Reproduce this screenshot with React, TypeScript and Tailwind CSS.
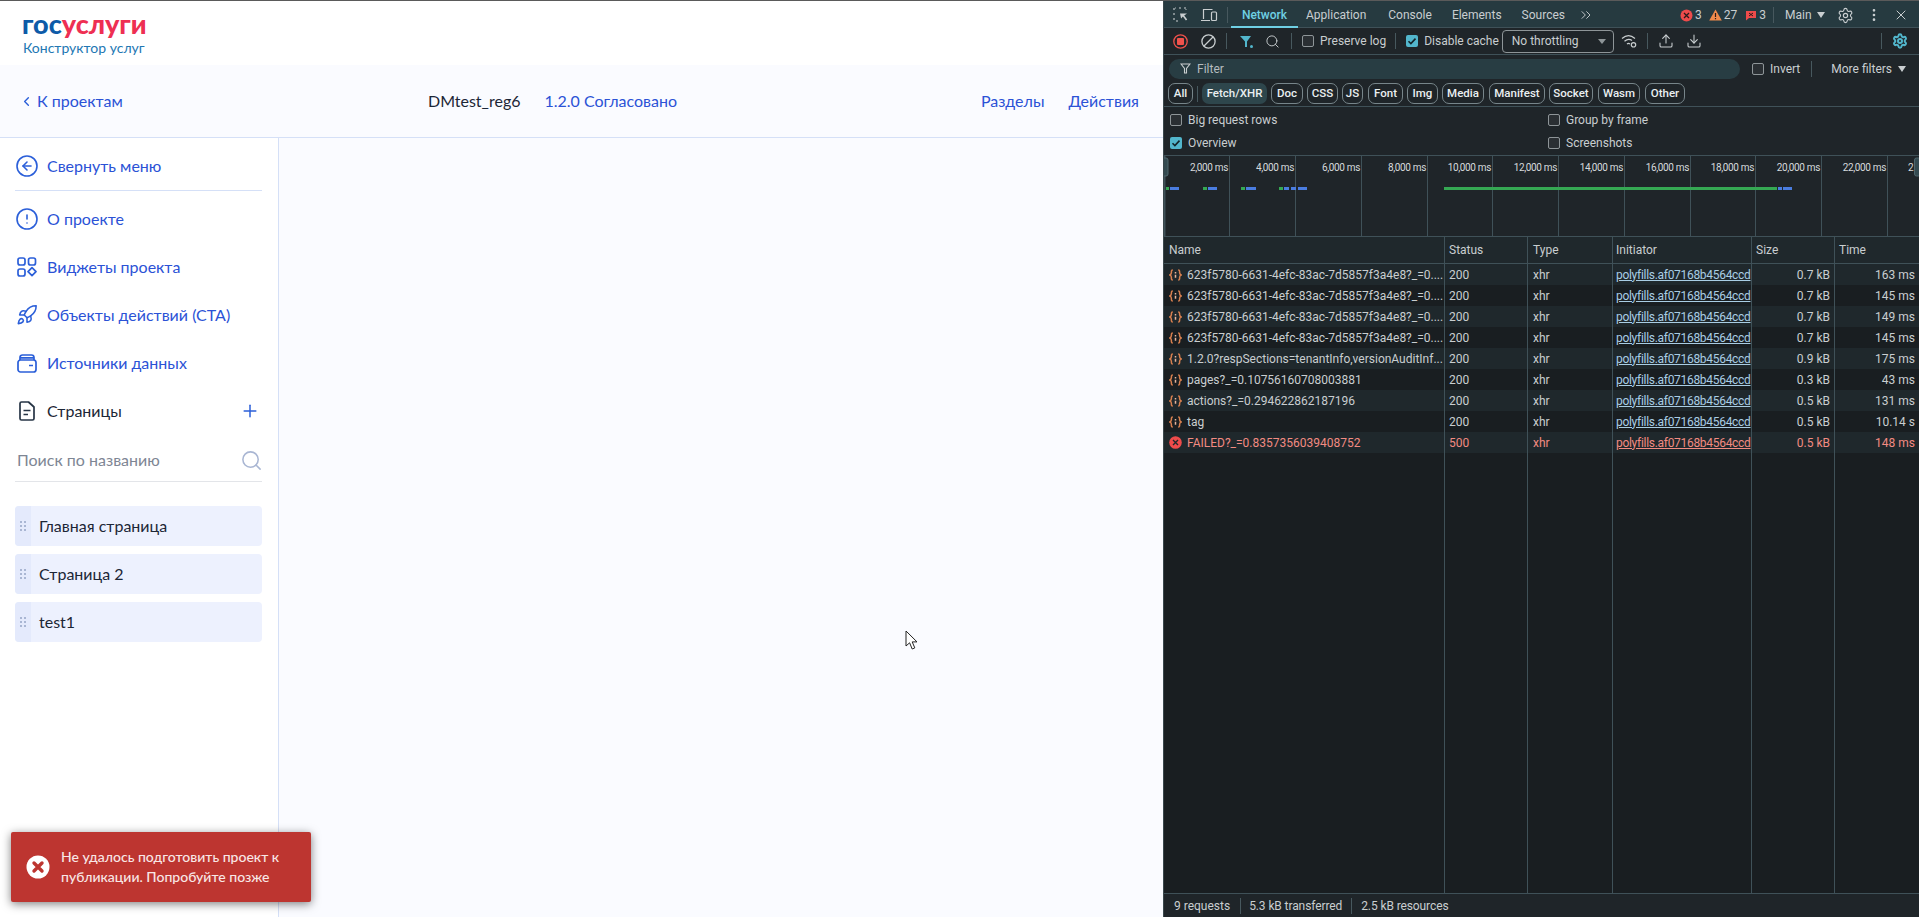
import React from "react";
import { CircleArrowLeft, CircleAlert, Rocket, Plus, Search, ChevronLeft, Settings, MoreVertical, X, Upload, Download, ChevronsRight } from "lucide-react";

const blue = "text-[#2b52d6]";

function Widgets() {
  return (
    <svg width="20" height="20" viewBox="0 0 20 20" fill="none" stroke="#2b5fd9" strokeWidth="1.7" className="shrink-0">
      <rect x="1" y="1" width="7" height="7" rx="2" />
      <rect x="11.5" y="1" width="7" height="7" rx="2" />
      <rect x="1" y="12" width="7" height="7" rx="2" />
      <path d="M15 10.6l4 4-4 4-4-4z" strokeLinejoin="round" />
    </svg>
  );
}
function Wallet() {
  return (
    <svg width="20" height="19" viewBox="0 0 20 19" fill="none" stroke="#2b5fd9" strokeWidth="1.7" className="shrink-0">
      <rect x="1" y="6" width="18" height="12" rx="2.5" />
      <path d="M3 6V3.5C3 2 4 1 5.5 1h9C16 1 17 2 17 3.5V6M3 3.8h14M12 11.5h4" />
    </svg>
  );
}
function Doc() {
  return (
    <svg width="16" height="20" viewBox="0 0 16 20" fill="none" stroke="#263445" strokeWidth="1.7" className="shrink-0">
      <path d="M2.5 1h7l5.5 5v11.5a1.5 1.5 0 0 1-1.5 1.5h-11A1.5 1.5 0 0 1 1 17.5v-15A1.5 1.5 0 0 1 2.5 1z" strokeLinejoin="round" />
      <path d="M4.5 9.5h7M4.5 13.5h4.5" />
    </svg>
  );
}

function NavRow({ icon, label, h = "h-12", dark = false, right }: { icon: React.ReactNode; label: string; h?: string; dark?: boolean; right?: React.ReactNode }) {
  return (
    <div className={`flex items-center ${h}`}>
      <div className="w-[24px] mr-[8px] flex justify-center shrink-0">{icon}</div>
      <span className={`text-[16px] ${dark ? "text-[#1c2636]" : blue}`}>{label}</span>
      {right}
    </div>
  );
}

function PageItem({ label }: { label: string }) {
  return (
    <div className="h-[40px] rounded-[4px] bg-[#edf1fe] flex overflow-hidden mb-[8px] items-center">
      <div className="w-[16px] h-full bg-[#e4eafc] flex items-center justify-center shrink-0">
        <svg width="6" height="10" viewBox="0 0 6 10" fill="#a9b6d3">
          <rect x="0" y="0" width="2" height="2" /><rect x="4" y="0" width="2" height="2" />
          <rect x="0" y="4" width="2" height="2" /><rect x="4" y="4" width="2" height="2" />
          <rect x="0" y="8" width="2" height="2" /><rect x="4" y="8" width="2" height="2" />
        </svg>
      </div>
      <span className="ml-[8px] text-[16px] text-[#1c2636]">{label}</span>
    </div>
  );
}

function LeftApp() {
  return (
    <div className="w-[1163px] h-full flex flex-col relative bg-[#fafbff] font-['Lato',sans-serif]">
      <header className="h-[64px] bg-white pl-[22px] pt-[9px] shrink-0">
        <div className="text-[27px] leading-[28px] font-black font-['Lato',sans-serif]">
          <span className="text-[#0d5ba8]">гос</span><span className="text-[#ee2f53]">услуги</span>
        </div>
        <div className="text-[14px] leading-[18px] text-[#2277b3] mt-[1px] ml-[1px]">Конструктор услуг</div>
      </header>
      <div className="h-[73px] shrink-0 border-b border-[#d5e0f7] flex items-center text-[16px] bg-[#fafbff]">
        <div className="w-[428px] flex items-center pl-[19px]">
          <ChevronLeft size={15} strokeWidth={2.2} className="text-[#2b5fd9]" />
          <span className={`${blue} ml-[3px]`}>К проектам</span>
        </div>
        <span className="text-[#1c2636]">DMtest_reg6</span>
        <span className={`${blue} ml-[24px]`}>1.2.0 Согласовано</span>
        <div className="ml-auto flex gap-[24px] pr-[24px]">
          <span className={blue}>Разделы</span>
          <span className={blue}>Действия</span>
        </div>
      </div>
      <div className="flex-1 flex min-h-0">
        <aside className="w-[279px] bg-white border-r border-[#d5e0f7] pl-[15px] pr-[16px] shrink-0">
          <div className="h-[53px] pt-[4px] border-b border-[#d5e0f7] flex items-center">
            <div className="w-[24px] mr-[8px] flex justify-center"><CircleArrowLeft size={24} strokeWidth={1.6} className="text-[#2b5fd9]" /></div>
            <span className={`text-[16px] ${blue}`}>Свернуть меню</span>
          </div>
          <div className="pt-[4px]">
            <NavRow icon={<CircleAlert size={24} strokeWidth={1.6} className="text-[#2b5fd9]" />} label="О проекте" />
            <NavRow icon={<Widgets />} label="Виджеты проекта" />
            <NavRow icon={<Rocket size={22} strokeWidth={1.7} className="text-[#2b5fd9]" />} label="Объекты действий (СТА)" />
            <NavRow icon={<Wallet />} label="Источники данных" />
            <NavRow icon={<Doc />} label="Страницы" dark right={<Plus size={20} strokeWidth={1.8} className="ml-auto mr-[2px] text-[#2b5fd9]" />} />
          </div>
          <div className="h-[47px] border-b border-[#e3e5e9] flex items-center justify-between text-[16px] text-[#7e8694] pt-[4px]">
            <span className="pl-[2px]">Поиск по названию</span>
            <Search size={23} strokeWidth={1.6} className="text-[#a9b6d3] -mr-[1px]" />
          </div>
          <div className="pt-[24px]">
            <PageItem label="Главная страница" />
            <PageItem label="Страница 2" />
            <PageItem label="test1" />
          </div>
        </aside>
        <main className="flex-1" />
      </div>
      <div className="absolute left-[11px] top-[831px] w-[300px] h-[70px] bg-[#bd3530] rounded-[2px] shadow-[0_2px_10px_rgba(0,0,0,0.5)] flex items-center text-white pl-[15px]">
        <svg width="24" height="24" viewBox="0 0 24 24" className="shrink-0">
          <circle cx="12" cy="12" r="11.5" fill="#fff" />
          <path d="M8 8l8 8M16 8l-8 8" stroke="#bd3530" strokeWidth="3.4" strokeLinecap="round" />
        </svg>
        <div className="ml-[11px] text-[14px] leading-[20px] font-medium text-[#f8e7e6]">
          Не удалось подготовить проект к<br />публикации. Попробуйте позже
        </div>
      </div>
      <svg width="14" height="20" viewBox="0 0 14 20" className="absolute left-[905px] top-[629px]">
        <path d="M1 1v15l3.6-3.2L7.2 19l2.6-1.1-2.6-6H12z" fill="#fff" stroke="#222" strokeWidth="1" strokeLinejoin="round" />
      </svg>
    </div>
  );
}

function Check({ on = false }: { on?: boolean }) {
  return on ? (
    <span className="w-[12px] h-[12px] rounded-[2px] bg-[#52b6cc] flex items-center justify-center shrink-0">
      <svg width="10" height="10" viewBox="0 0 10 10" fill="none" stroke="#14242a" strokeWidth="1.6"><path d="M1.5 5.2l2.4 2.4 4.6-5" /></svg>
    </span>
  ) : (
    <span className="block w-[12px] h-[12px] rounded-[2px] border border-[#8e9598] bg-[#2a2f33] shrink-0" />
  );
}

const Divider = ({ ml }: { ml: string }) => <span className={`w-px h-[16px] bg-[#47585e] shrink-0 ${ml}`} />;

function Chip({ label, w, ml, active = false }: { label: string; w: string; ml: string; active?: boolean }) {
  return (
    <span className={`h-[21px] rounded-[7px] flex items-center justify-center text-[11.5px] font-medium shrink-0 ${w} ${ml} ${active ? "bg-[#2e464c] text-[#eaeff1]" : "border border-[#77858a] text-[#eaeff1]"}`}>
      {label}
    </span>
  );
}

function Overview() {
  const lines = [1229, 1295, 1361, 1427, 1492, 1558, 1624, 1690, 1755, 1821, 1887];
  const labels = ["2,000 ms", "4,000 ms", "6,000 ms", "8,000 ms", "10,000 ms", "12,000 ms", "14,000 ms", "16,000 ms", "18,000 ms", "20,000 ms", "22,000 ms"];
  const ox = 1164;
  const segs: [number, number, string][] = [
    [1166, 1169, "#35a853"], [1170, 1179, "#4a7de0"], [1203, 1207, "#35a853"], [1208, 1217, "#4a7de0"],
    [1241, 1245, "#35a853"], [1246, 1256, "#4a7de0"], [1279, 1283, "#35a853"], [1284, 1289, "#4a7de0"],
    [1291, 1296, "#4a7de0"], [1298, 1307, "#4a7de0"], [1444, 1777, "#35a853"], [1778, 1782, "#4a7de0"], [1783, 1792, "#4a7de0"],
  ];
  return (
    <svg width="755" height="80" className="block shrink-0 font-['Roboto',sans-serif]">
      {lines.map((x) => <line key={x} x1={x - ox + 0.5} x2={x - ox + 0.5} y1="0" y2="80" stroke="#3f5158" />)}
      {labels.map((t, i) => (
        <text key={t} x={lines[i] - ox - 1} y="15" textAnchor="end" fontSize="10" letterSpacing="-0.35" fill="#d6dadc">{t}</text>
      ))}
      <text x="744" y="15" fontSize="10" fill="#d6dadc">2</text>
      {segs.map(([a, b, c]) => <rect key={a} x={a - ox} y="31" width={b - a} height="3" fill={c} />)}
      <rect x="0" y="0" width="1.5" height="80" fill="#3f5158" />
      <rect x="-2" y="2" width="6" height="18" rx="2" fill="#344a50" stroke="#4f666d" />
      <rect x="750.5" y="2" width="6" height="18" rx="2" fill="#344a50" stroke="#4f666d" />
    </svg>
  );
}

function XhrIcon() {
  return (
    <svg width="13" height="12" viewBox="0 0 13 12" fill="none" stroke="#d9804f" strokeWidth="1.5" className="shrink-0">
      <path d="M3.8 1C2.2 1 2.4 2.4 2.4 3.6c0 1.2-.4 2-1.6 2.4 1.2.4 1.6 1.2 1.6 2.4 0 1.2-.2 2.6 1.4 2.6M9.2 1c1.6 0 1.4 1.4 1.4 2.6 0 1.2.4 2 1.6 2.4-1.2.4-1.6 1.2-1.6 2.4 0 1.2.2 2.6-1.4 2.6" />
      <path d="M6.5 3v1.4M6.5 5.8v3" stroke="#e8b49a" />
    </svg>
  );
}
function ErrIcon() {
  return (
    <svg width="13" height="13" viewBox="0 0 13 13" className="shrink-0">
      <circle cx="6.5" cy="6.5" r="6.3" fill="#ee4b4b" />
      <path d="M4 4l5 5M9 4l-5 5" stroke="#20282c" strokeWidth="1.4" />
    </svg>
  );
}

const cols = "grid grid-cols-[281px_83px_85px_139px_83px_1fr]";
const cell = "border-r border-[#3f5158] h-full flex items-center overflow-hidden whitespace-nowrap";
const LONG = "623f5780-6631-4efc-83ac-7d5857f3a4e8?_=0....";
const rows: [string, string, string, string][] = [
  [LONG, "200", "0.7 kB", "163 ms"],
  [LONG, "200", "0.7 kB", "145 ms"],
  [LONG, "200", "0.7 kB", "149 ms"],
  [LONG, "200", "0.7 kB", "145 ms"],
  ["1.2.0?respSections=tenantInfo,versionAuditInf...", "200", "0.9 kB", "175 ms"],
  ["pages?_=0.10756160708003881", "200", "0.3 kB", "43 ms"],
  ["actions?_=0.294622862187196", "200", "0.5 kB", "131 ms"],
  ["tag", "200", "0.5 kB", "10.14 s"],
  ["FAILED?_=0.8357356039408752", "500", "0.5 kB", "148 ms"],
];

function DevTools() {
  return (
    <div className="flex-1 h-full flex flex-col bg-[#1f2529] text-[#c9ced0] text-[12px] font-['Roboto',sans-serif] border-l border-[#3a474c] min-w-0">
      {/* tabs */}
      <div className="h-[27px] shrink-0 bg-[#263a40] border-b border-[#3f5158] flex items-center pt-[2px]">
        <svg width="16" height="16" viewBox="0 0 16 16" fill="none" stroke="#c9ced0" strokeWidth="1.1" className="ml-[9px] shrink-0">
          <path d="M1 13V11M1 8V6M1 3V1h2M6 1h2M11 1h2v2M3 14h2" strokeDasharray="2 1.2" />
          <path d="M7 6.5h7l-2.8 2 3 4-1.3 1-3-4-1.8 2z" fill="#c9ced0" stroke="none" />
        </svg>
        <svg width="18" height="14" viewBox="0 0 18 14" fill="none" stroke="#c9ced0" strokeWidth="1.2" className="ml-[11px] shrink-0">
          <path d="M3.5 11V1.5h9M1 12.5h9" /><rect x="11.5" y="4" width="5" height="8.5" rx="1" />
        </svg>
        <Divider ml="ml-[9px]" />
        <div className="relative self-stretch w-[67px] ml-[3px] flex items-center justify-center text-[#6fd0e4] font-medium">
          Network
          <span className="absolute left-0 right-0 bottom-[-1px] h-[2px] bg-[#6fd0e4]" />
        </div>
        <span className="ml-[8px]">Application</span>
        <span className="ml-[22px]">Console</span>
        <span className="ml-[20px]">Elements</span>
        <span className="ml-[20px]">Sources</span>
        <ChevronsRight size={16} strokeWidth={1.4} className="ml-[13px]" />
        <svg width="13" height="13" viewBox="0 0 13 13" className="ml-[86px] shrink-0 mr-[2px]">
          <circle cx="6.5" cy="6.5" r="6" fill="#ee4b4b" /><path d="M4 4l5 5M9 4l-5 5" stroke="#2a1a1a" strokeWidth="1.3" />
        </svg>
        <span>3</span>
        <svg width="13" height="12" viewBox="0 0 13 12" className="ml-[7px] shrink-0 mr-[2px]">
          <path d="M6.5 0.5L12.8 11.5H0.2z" fill="#f08a4b" /><path d="M6.5 4v4M6.5 9v1.3" stroke="#2a1a1a" strokeWidth="1.2" />
        </svg>
        <span>27</span>
        <svg width="12" height="11" viewBox="0 0 12 11" className="ml-[8px] shrink-0 mr-[2px]">
          <path d="M1 1h10v7H4L1 10.5z" fill="#ee4b4b" /><path d="M4 3l4 3M8 3l-4 3" stroke="#2a1a1a" strokeWidth="1" />
        </svg>
        <span>3</span>
        <Divider ml="ml-[7px]" />
        <span className="ml-[11px]">Main</span>
        <span className="ml-[5px] w-0 h-0 border-x-[4px] border-x-transparent border-t-[6px] border-t-[#c9ced0]" />
        <Settings size={17} strokeWidth={1.6} className="ml-[12px]" />
        <MoreVertical size={16} strokeWidth={2} className="ml-[12px]" />
        <X size={16} strokeWidth={1.5} className="ml-[11px]" />
      </div>
      {/* toolbar */}
      <div className="h-[27px] shrink-0 border-b border-[#3f5158] flex items-center">
        <svg width="15" height="15" viewBox="0 0 15 15" className="ml-[9px] shrink-0">
          <circle cx="7.5" cy="7.5" r="6.7" fill="none" stroke="#f0524c" strokeWidth="1.3" /><rect x="4" y="4" width="7" height="7" rx="1" fill="#f0524c" />
        </svg>
        <svg width="15" height="15" viewBox="0 0 15 15" fill="none" stroke="#c9ced0" strokeWidth="1.3" className="ml-[13px] shrink-0">
          <circle cx="7.5" cy="7.5" r="6.6" /><path d="M3 12L12 3" />
        </svg>
        <Divider ml="ml-[10px]" />
        <svg width="15" height="15" viewBox="0 0 15 15" className="ml-[12px] shrink-0">
          <path d="M1 2h11L8 7.5V13H6V7.5z" fill="#52b6cc" /><circle cx="12.5" cy="12.5" r="1.5" fill="#52b6cc" />
        </svg>
        <Search size={15} strokeWidth={1.5} className="ml-[11px]" />
        <Divider ml="ml-[11px]" />
        <span className="ml-[10px]"><Check /></span>
        <span className="ml-[6px]">Preserve log</span>
        <Divider ml="ml-[9px]" />
        <span className="ml-[10px]"><Check on /></span>
        <span className="ml-[6px]">Disable cache</span>
        <div className="ml-[3px] w-[112px] h-[23px] rounded-[4px] border border-[#8e9598] flex items-center pl-[9px] pr-[7px] justify-between shrink-0">
          <span>No throttling</span>
          <span className="w-0 h-0 border-x-[4px] border-x-transparent border-t-[5px] border-t-[#8e9598]" />
        </div>
        <svg width="16" height="14" viewBox="0 0 16 14" fill="none" stroke="#c9ced0" strokeWidth="1.2" className="ml-[7px] shrink-0">
          <path d="M1 4.5C5 1 10 1 14 4.5M3.5 7.2C6 5 9 5 11 6.5M6 10c1-.8 2-.8 3 0" /><circle cx="12.5" cy="10.8" r="2.2" />
        </svg>
        <Divider ml="ml-[10px]" />
        <Upload size={16} strokeWidth={1.6} className="ml-[10px]" />
        <Download size={16} strokeWidth={1.6} className="ml-[12px]" />
        <Divider ml="ml-auto" />
        <Settings size={16} strokeWidth={3} className="ml-[10px] mr-[11px] text-[#52b6cc]" />
      </div>
      {/* filter */}
      <div className="h-[27px] shrink-0 flex items-center">
        <div className="ml-[5px] w-[571px] h-[20px] rounded-full bg-[#283d43] flex items-center pl-[11px]">
          <svg width="11" height="11" viewBox="0 0 11 11" fill="none" stroke="#c9ced0" strokeWidth="1.1"><path d="M1 1h9L6.5 5.5V10h-2V5.5z" /></svg>
          <span className="ml-[6px] text-[#b5bcbf]">Filter</span>
        </div>
        <span className="ml-[12px]"><Check /></span>
        <span className="ml-[6px]">Invert</span>
        <Divider ml="ml-[11px]" />
        <span className="ml-[19px]">More filters</span>
        <span className="ml-[6px] w-0 h-0 border-x-[4px] border-x-transparent border-t-[6px] border-t-[#c9ced0]" />
      </div>
      {/* chips */}
      <div className="h-[25px] shrink-0 border-b border-[#3f5158] flex items-center pb-[1px]">
        <Chip label="All" w="w-[25px]" ml="ml-[4px]" />
        <Divider ml="ml-[4px]" />
        <Chip label="Fetch/XHR" w="w-[65px]" ml="ml-[4px]" active />
        <Chip label="Doc" w="w-[32px]" ml="ml-[4px]" />
        <Chip label="CSS" w="w-[31px]" ml="ml-[4px]" />
        <Chip label="JS" w="w-[21px]" ml="ml-[4px]" />
        <Chip label="Font" w="w-[35px]" ml="ml-[5px]" />
        <Chip label="Img" w="w-[31px]" ml="ml-[4px]" />
        <Chip label="Media" w="w-[42px]" ml="ml-[4px]" />
        <Chip label="Manifest" w="w-[56px]" ml="ml-[5px]" />
        <Chip label="Socket" w="w-[44px]" ml="ml-[4px]" />
        <Chip label="Wasm" w="w-[42px]" ml="ml-[5px]" />
        <Chip label="Other" w="w-[40px]" ml="ml-[5px]" />
      </div>
      {/* settings */}
      <div className="h-[49px] shrink-0 border-b border-[#3f5158] grid grid-cols-[378px_1fr] grid-rows-[24px_22px] pl-[6px] items-center pt-[1px]">
        <div className="flex items-center gap-[6px]"><Check /><span>Big request rows</span></div>
        <div className="flex items-center gap-[6px]"><Check /><span>Group by frame</span></div>
        <div className="flex items-center gap-[6px]"><Check on /><span>Overview</span></div>
        <div className="flex items-center gap-[6px]"><Check /><span>Screenshots</span></div>
      </div>
      <Overview />
      {/* table */}
      <div className="flex-1 min-h-0 flex flex-col bg-[#191e21] border-t border-[#3f5158]">
        <div className={`${cols} h-[27px] shrink-0 bg-[#1f282c] border-b border-[#3f5158]`}>
          <div className={`${cell} pl-[5px]`}>Name</div>
          <div className={`${cell} pl-[4px]`}>Status</div>
          <div className={`${cell} pl-[5px]`}>Type</div>
          <div className={`${cell} pl-[3px]`}>Initiator</div>
          <div className={`${cell} pl-[4px]`}>Size</div>
          <div className={`${cell} pl-[4px] border-r-0`}>Time</div>
        </div>
        {rows.map((r, i) => {
          const err = r[1] === "500";
          return (
            <div key={i} className={`${cols} h-[21px] shrink-0 ${i % 2 === 0 ? "bg-[#1f282c]" : "bg-[#191e21]"} ${err ? "text-[#f28b82]" : ""}`}>
              <div className={`${cell} pl-[5px] gap-[5px]`}>
                {err ? <ErrIcon /> : <XhrIcon />}
                <span>{r[0]}</span>
              </div>
              <div className={`${cell} pl-[4px]`}>{r[1]}</div>
              <div className={`${cell} pl-[5px]`}>xhr</div>
              <div className={`${cell} pl-[3px] underline tracking-[-0.3px] ${err ? "" : "text-[#a9cde4]"}`}>polyfills.af07168b4564ccd</div>
              <div className={`${cell} justify-end pr-[4px]`}>{r[2]}</div>
              <div className={`${cell} justify-end pr-[4px] border-r-0`}>{r[3]}</div>
            </div>
          );
        })}
        <div className={`${cols} flex-1`}>
          <div className={cell} /><div className={cell} /><div className={cell} />
          <div className={cell} /><div className={cell} /><div />
        </div>
      </div>
      {/* footer */}
      <div className="h-[24px] shrink-0 border-t border-[#3f5158] bg-[#1f2529] flex items-center">
        <span className="ml-[10px]">9 requests</span>
        <Divider ml="ml-[10px]" />
        <span className="ml-[8px] tracking-[-0.1px]">5.3 kB transferred</span>
        <Divider ml="ml-[9px]" />
        <span className="ml-[9px] tracking-[-0.1px]">2.5 kB resources</span>
      </div>
    </div>
  );
}

export default function App() {
  return (
    <div className="w-[1919px] h-[917px] overflow-hidden flex flex-col bg-white">
      <div className="h-px bg-[#5a5a5a] shrink-0" />
      <div className="flex-1 flex min-h-0">
        <LeftApp />
        <DevTools />
      </div>
    </div>
  );
}
